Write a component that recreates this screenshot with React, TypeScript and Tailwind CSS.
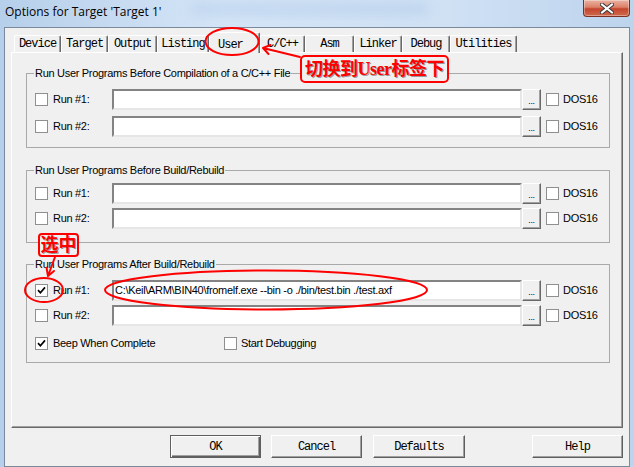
import React from 'react';

// Dialog text: small Arial-style face, slightly condensed
const ui = "font-['Liberation_Sans',Arial,sans-serif] text-[11px] tracking-[-0.3px] text-black";
// Bitmap-ish fixed font used on tabs and push buttons
const fixed = "font-['Liberation_Mono','Courier_New',monospace] text-[12px] tracking-[-1px] text-black";
const redNote =
  "font-['Liberation_Serif','Noto_Sans_CJK_SC',serif] font-bold text-[18px] leading-none text-[#ff0000] [text-shadow:1px_1px_0_#9a9a9a]";

const tabs = [
  { label: 'Device', w: 'w-[47px]' },
  { label: 'Target', w: 'w-[47px]' },
  { label: 'Output', w: 'w-[49px]' },
  { label: 'Listing', w: 'w-[52px]' },
  { label: 'User', w: 'w-[51px]', active: true },
  { label: 'C/C++', w: 'w-[45px]' },
  { label: 'Asm', w: 'w-[49px]' },
  { label: 'Linker', w: 'w-[48px]' },
  { label: 'Debug', w: 'w-[48px]' },
  { label: 'Utilities', w: 'w-[67px]' },
];

function CheckBox({ checked }: { checked?: boolean }) {
  return (
    <span className="flex h-[13px] w-[13px] shrink-0 items-center justify-center border border-[#8e8f8f] bg-white">
      {checked && (
        <svg width="9" height="9" viewBox="0 0 9 9">
          <path d="M1 4.2 L3.4 6.8 L8 1.4" stroke="#000" strokeWidth="1.7" fill="none" />
        </svg>
      )}
    </span>
  );
}

function BrowseButton() {
  return (
    <div className="flex h-[21px] w-[19px] shrink-0 items-end justify-center border border-t-white border-l-white border-r-[#696969] border-b-[#696969] bg-[#f0f0f0] pb-[3px] shadow-[inset_-1px_-1px_0_#a0a0a0] text-[9px] leading-none">
      ...
    </div>
  );
}

function RunRow({ n, value, checked }: { n: number; value?: string; checked?: boolean }) {
  return (
    <div className="flex h-[21px] items-center">
      <CheckBox checked={checked} />
      <span className="ml-[5px] w-[59px]">Run #{n}:</span>
      <div className="flex h-[21px] w-[410px] items-center border-2 border-t-[#838383] border-l-[#838383] border-r-[#e6e6e6] border-b-[#e6e6e6] bg-white pl-[1px] whitespace-nowrap">
        {value}
      </div>
      <BrowseButton />
      <span className="ml-[5px]">
        <CheckBox />
      </span>
      <span className="ml-[4px]">DOS16</span>
    </div>
  );
}

function Group({
  title,
  className,
  children,
}: {
  title: string;
  className: string;
  children: React.ReactNode;
}) {
  return (
    <fieldset className={`ml-[14px] w-[584px] border border-[#a9a9a9] pl-[8px] ${className}`}>
      <legend className="-ml-[1px] px-[1px] leading-[14px]">{title}</legend>
      {children}
    </fieldset>
  );
}

function DialogButton({ label, isDefault, className = '' }: { label: string; isDefault?: boolean; className?: string }) {
  return (
    <button
      type="button"
      className={`flex h-[23px] items-center justify-center bg-[#f0f0f0] ${fixed} ${
        isDefault
          ? 'border border-[#5f5f5f] shadow-[inset_1px_1px_0_#fff,inset_-1px_-1px_0_#5f5f5f,inset_-2px_-2px_0_#a0a0a0]'
          : 'border border-t-white border-l-white border-r-[#5f5f5f] border-b-[#5f5f5f] shadow-[inset_-1px_-1px_0_#a0a0a0]'
      } ${className}`}
    >
      {label}
    </button>
  );
}

function TitleBar() {
  return (
    <div className="relative flex h-[27px] shrink-0 items-start">
      <div className="absolute left-[190px] top-[2px] h-[14px] w-[240px] rounded-full bg-[#a9c6e6] opacity-40 blur-[6px]" />
      <span className="relative ml-[5px] mt-[3px] font-['Open_Sans','Noto_Sans',sans-serif] text-[12px] leading-[18px] text-black">
        Options for Target 'Target 1'
      </span>
      <div className="relative ml-auto mr-[4px] flex h-[17px] w-[47px] items-center justify-center rounded-b-[4px] border border-t-0 border-[#7d2f24] bg-[linear-gradient(180deg,#eab3a3_0%,#dc8068_45%,#c4452e_55%,#cf6a4b_100%)] shadow-[inset_0_0_0_1px_rgba(255,255,255,0.35)]">
        <svg width="14" height="11" viewBox="0 0 14 11">
          <path d="M2 1.5 L12 9.5 M12 1.5 L2 9.5" stroke="#3b3b3b" strokeWidth="4" strokeLinecap="square" />
          <path d="M2 1.5 L12 9.5 M12 1.5 L2 9.5" stroke="#fff" strokeWidth="2" strokeLinecap="square" />
        </svg>
      </div>
    </div>
  );
}

function Annotations() {
  return (
    <>
      <svg className="pointer-events-none absolute left-0 top-0 z-20" width="634" height="467" viewBox="0 0 634 467">
        <g stroke="#ff0000" strokeWidth="2" fill="none" strokeLinecap="round">
          {/* ring around the User tab */}
          <ellipse cx="232" cy="41.5" rx="26.5" ry="13.5" />
          <path d="M300 57 L263 48 M263 48 L270.5 45 M263 48 L268.5 54" />
          {/* ring around the Run #1 checkbox */}
          <ellipse cx="44" cy="290" rx="19" ry="12" />
          <path d="M55 257 L48 276 M48 276 L54 271 M48 276 L46.6 268" />
          {/* ring around the command line */}
          <ellipse cx="266" cy="290" rx="161" ry="19.5" />
        </g>
      </svg>
      <div className="absolute left-[300px] top-[55px] z-20 flex h-[28px] w-[149px] items-center justify-center rounded-[5px] border-2 border-[#ff0000] bg-[#f0f0f0]">
        <span className={`${redNote} tracking-[-0.5px]`}>切换到User标签下</span>
      </div>
      <div className="absolute left-[38px] top-[233px] z-20 flex h-[24px] w-[41px] items-center justify-center rounded-[4px] border-2 border-[#ff0000] bg-[#f0f0f0]">
        <span className={redNote}>选中</span>
      </div>
    </>
  );
}

export default function App() {
  return (
    <div className="relative flex h-[467px] w-[634px] flex-col overflow-hidden bg-[linear-gradient(90deg,#b6cfea,#d5e5f7_35%,#d0e1f4_70%,#bdd4ed)]">
      <TitleBar />

      <div className={`mx-[4px] flex h-[440px] flex-col border border-[#7b8a9a] bg-[#f0f0f0] ${ui}`}>
        <div className="px-[6px] pt-[4px]">
          {/* tab strip */}
          <div className="flex h-[20px] items-end pl-[3px]">
            {tabs.map((t) =>
              t.active ? (
                <div
                  key={t.label}
                  className={`relative z-10 -mb-[1px] flex h-[21px] ${t.w} items-start justify-start rounded-t-[2px] border-l border-t border-white border-r border-r-[#696969] bg-[#f0f0f0] pl-[8px] pt-[3px] shadow-[inset_-1px_0_0_#a0a0a0] ${fixed}`}
                >
                  {t.label}
                </div>
              ) : (
                <div
                  key={t.label}
                  className={`flex h-[17px] ${t.w} items-center justify-center rounded-t-[2px] border-l border-t border-white border-r border-r-[#696969] shadow-[inset_-1px_0_0_#a0a0a0] ${fixed}`}
                >
                  {t.label}
                </div>
              ),
            )}
          </div>

          {/* tab page */}
          <div className="flex h-[376px] flex-col border border-t-white border-l-white border-r-[#696969] border-b-[#696969] shadow-[inset_-1px_-1px_0_#a0a0a0]">
            <Group title="Run User Programs Before Compilation of a C/C++ File" className="mt-[13px] pt-[9px] pb-[10px]">
              <div className="flex flex-col gap-[6px]">
                <RunRow n={1} />
                <RunRow n={2} />
              </div>
            </Group>

            <Group title="Run User Programs Before Build/Rebuild" className="mt-[15px] pt-[6px] pb-[13px]">
              <div className="flex flex-col gap-[4px]">
                <RunRow n={1} />
                <RunRow n={2} />
              </div>
            </Group>

            <Group title="Run User Programs After Build/Rebuild" className="mt-[14px] pt-[9px] pb-[12px]">
              <div className="flex flex-col gap-[4px]">
                <RunRow n={1} checked value="C:\Keil\ARM\BIN40\fromelf.exe --bin -o ./bin/test.bin ./test.axf" />
                <RunRow n={2} />
              </div>
              <div className="mt-[10px] flex h-[14px] items-center">
                <CheckBox checked />
                <span className="ml-[5px] w-[171px]">Beep When Complete</span>
                <CheckBox />
                <span className="ml-[4px]">Start Debugging</span>
              </div>
            </Group>
          </div>
        </div>

        <div className="mt-[7px] flex pl-[165px] pr-[6px]">
          <DialogButton label="OK" isDefault className="w-[91px]" />
          <DialogButton label="Cancel" className="ml-[10px] w-[91px]" />
          <DialogButton label="Defaults" className="ml-[11px] w-[92px]" />
          <DialogButton label="Help" className="ml-auto w-[91px]" />
        </div>
      </div>

      <Annotations />
    </div>
  );
}
